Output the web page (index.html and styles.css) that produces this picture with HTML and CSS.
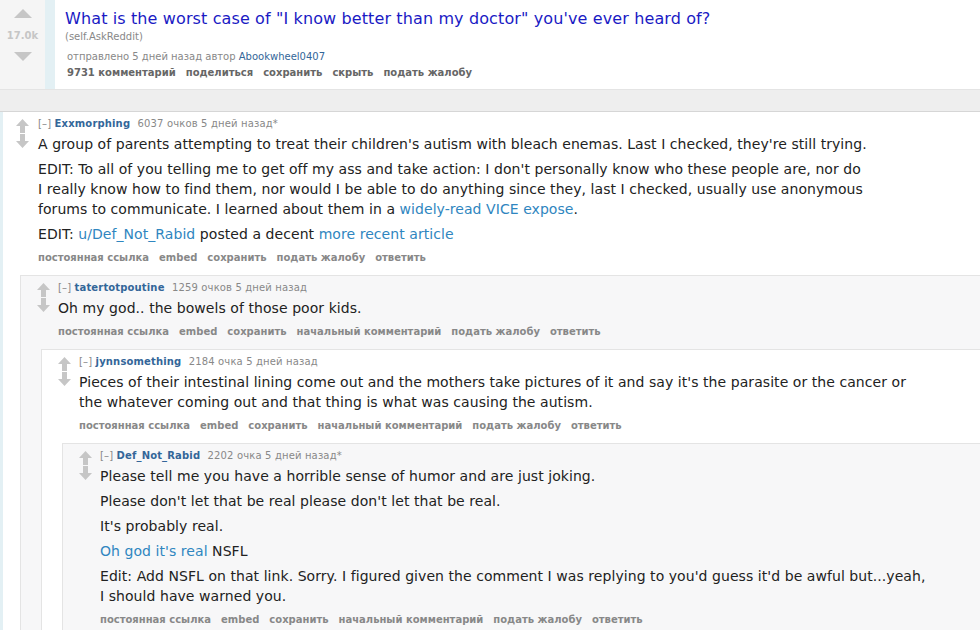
FILE: index.html
```html
<!DOCTYPE html>
<html lang="ru">
<head>
    <meta charset="UTF-8">
    <title>What is the worst case of "I know better than my doctor" you've ever heard of? : AskReddit</title>
    <link rel="stylesheet" href="styles.css">
</head>
<body>

    <!-- пост -->
    <div class="post">
      <div class="post-votes">
        <span class="tri tri-up"></span>
        <span class="score">17.0k</span>
        <span class="tri tri-down"></span>
      </div>
      <div class="post-strip"></div>
      <div class="post-entry">
        <a class="post-title" href="#">What is the worst case of "I know better than my doctor" you've ever heard of?</a>
        <span class="domain">(self.AskReddit)</span>
        <p class="post-tagline">отправлено 5 дней назад автор <a href="#">Abookwheel0407</a></p>
        <ul class="buttons post-buttons">
          <li><a href="#">9731 комментарий</a></li>
          <li><a href="#">поделиться</a></li>
          <li><a href="#">сохранить</a></li>
          <li><a href="#">скрыть</a></li>
          <li><a href="#">подать жалобу</a></li>
        </ul>
      </div>
    </div>

    <div class="band"></div>

    <!-- комментарии -->
    <div class="comments">

      <div class="comment odd top">
        <div class="votes">
          <svg class="arrow" viewBox="0 0 13 14"><path d="M6.5 0 L13 7 H9 V14 H4 V7 H0 Z"/></svg>
          <svg class="arrow" viewBox="0 0 13 14"><path d="M6.5 14 L13 7 H9 V0 H4 V7 H0 Z"/></svg>
        </div>
        <p class="tagline"><a class="expand" href="#">[–]</a> <a class="author" href="#">Exxmorphing</a> <span class="meta">6037 очков 5 дней назад*</span></p>
        <div class="md">
          <p>A group of parents attempting to treat their children's autism with bleach enemas. Last I checked, they're still trying.</p>
          <p>EDIT: To all of you telling me to get off my ass and take action: I don't personally know who these people are, nor do I really know how to find them, nor would I be able to do anything since they, last I checked, usually use anonymous forums to communicate. I learned about them in a <a href="#">widely-read VICE expose</a>.</p>
          <p>EDIT: <a href="#">u/Def_Not_Rabid</a> posted a decent <a href="#">more recent article</a></p>
        </div>
        <ul class="buttons">
          <li><a href="#">постоянная ссылка</a></li>
          <li><a href="#">embed</a></li>
          <li><a href="#">сохранить</a></li>
          <li><a href="#">подать жалобу</a></li>
          <li><a href="#">ответить</a></li>
        </ul>

        <div class="child">
          <div class="comment even">
            <div class="votes">
              <svg class="arrow" viewBox="0 0 13 14"><path d="M6.5 0 L13 7 H9 V14 H4 V7 H0 Z"/></svg>
              <svg class="arrow" viewBox="0 0 13 14"><path d="M6.5 14 L13 7 H9 V0 H4 V7 H0 Z"/></svg>
            </div>
            <p class="tagline"><a class="expand" href="#">[–]</a> <a class="author" href="#">tatertotpoutine</a> <span class="meta">1259 очков 5 дней назад</span></p>
            <div class="md">
              <p>Oh my god.. the bowels of those poor kids.</p>
            </div>
            <ul class="buttons">
              <li><a href="#">постоянная ссылка</a></li>
              <li><a href="#">embed</a></li>
              <li><a href="#">сохранить</a></li>
              <li><a href="#">начальный комментарий</a></li>
              <li><a href="#">подать жалобу</a></li>
              <li><a href="#">ответить</a></li>
            </ul>

            <div class="child">
              <div class="comment odd">
                <div class="votes">
                  <svg class="arrow" viewBox="0 0 13 14"><path d="M6.5 0 L13 7 H9 V14 H4 V7 H0 Z"/></svg>
                  <svg class="arrow" viewBox="0 0 13 14"><path d="M6.5 14 L13 7 H9 V0 H4 V7 H0 Z"/></svg>
                </div>
                <p class="tagline"><a class="expand" href="#">[–]</a> <a class="author" href="#">jynnsomething</a> <span class="meta">2184 очка 5 дней назад</span></p>
                <div class="md">
                  <p>Pieces of their intestinal lining come out and the mothers take pictures of it and say it's the parasite or the cancer or the whatever coming out and that thing is what was causing the autism.</p>
                </div>
                <ul class="buttons">
                  <li><a href="#">постоянная ссылка</a></li>
                  <li><a href="#">embed</a></li>
                  <li><a href="#">сохранить</a></li>
                  <li><a href="#">начальный комментарий</a></li>
                  <li><a href="#">подать жалобу</a></li>
                  <li><a href="#">ответить</a></li>
                </ul>

                <div class="child">
                  <div class="comment even">
                    <div class="votes">
                      <svg class="arrow" viewBox="0 0 13 14"><path d="M6.5 0 L13 7 H9 V14 H4 V7 H0 Z"/></svg>
                      <svg class="arrow" viewBox="0 0 13 14"><path d="M6.5 14 L13 7 H9 V0 H4 V7 H0 Z"/></svg>
                    </div>
                    <p class="tagline"><a class="expand" href="#">[–]</a> <a class="author" href="#">Def_Not_Rabid</a> <span class="meta">2202 очка 5 дней назад*</span></p>
                    <div class="md">
                      <p>Please tell me you have a horrible sense of humor and are just joking.</p>
                      <p>Please don't let that be real please don't let that be real.</p>
                      <p>It's probably real.</p>
                      <p><a href="#">Oh god it's real</a> NSFL</p>
                      <p>Edit: Add NSFL on that link. Sorry. I figured given the comment I was replying to you'd guess it'd be awful but...yeah, I should have warned you.</p>
                    </div>
                    <ul class="buttons">
                      <li><a href="#">постоянная ссылка</a></li>
                      <li><a href="#">embed</a></li>
                      <li><a href="#">сохранить</a></li>
                      <li><a href="#">начальный комментарий</a></li>
                      <li><a href="#">подать жалобу</a></li>
                      <li><a href="#">ответить</a></li>
                    </ul>
                  </div>
                </div>

              </div>
            </div>

          </div>
        </div>
      </div>

    </div>

</body>
</html>
```

FILE: styles.css
```css
* {
    box-sizing: border-box;
}

body {
    margin: 0;
    font-family: "DejaVu Sans", Verdana, sans-serif;
    color: #222;
    background: #fff;
    overflow: hidden;
}

a {
    text-decoration: none;
}

p {
    margin: 0;
}

/* ---------- кнопки ---------- */
.buttons {
    list-style: none;
    margin: 1px 0 9px;
    padding: 0;
    display: flex;
    font-size: 10px;
    line-height: 16px;
}

.buttons li {
    margin-right: 10px;
}

.buttons a {
    color: #888;
    font-weight: bold;
}

/* ---------- пост ---------- */
.post {
    display: flex;
    height: 89px;
}

.post-votes {
    width: 45px;
    background: #f5f5f5;
    display: flex;
    flex-direction: column;
    align-items: center;
    padding-top: 9px;
}

.tri {
    width: 0;
    height: 0;
    border-left: 9px solid transparent;
    border-right: 9px solid transparent;
}

.tri-up {
    border-bottom: 9px solid #c6c6c6;
}

.tri-down {
    border-top: 9px solid #c6c6c6;
}

.score {
    font-size: 10px;
    font-weight: bold;
    color: #c6c6c6;
    margin: 12px 0 11px;
}

.post-strip {
    width: 10px;
    background: #e3f0f4;
}

.post-entry {
    padding: 8px 0 0 10px;
}

.post-title {
    display: block;
    font-size: 16px;
    line-height: 22px;
    letter-spacing: 0.12px;
    color: #1a1ac4;
}

.domain {
    display: block;
    font-size: 10px;
    line-height: 14px;
    color: #888;
}

.post-tagline {
    font-size: 10px;
    line-height: 14px;
    color: #888;
    margin: 6px 0 0 2px;
}

.post-tagline a {
    color: #369;
}

.post-buttons {
    margin: 1px 0 0 2px;
}

.post-buttons a {
    color: #666;
}

.band {
    height: 23px;
    background: #eee;
    border-top: 1px solid #e4e4e4;
    border-bottom: 1px solid #d6d6d6;
}

/* ---------- комментарии ---------- */
.comments {
    border-left: 3px solid #e3f0f4;
}

.comment {
    display: grid;
    grid-template-columns: 35px 1fr;
    padding-top: 5px;
}

.comment.odd {
    background: #fff;
}

.comment.even {
    background: #f7f7f8;
}

.child .comment {
    grid-template-columns: 37px 1fr;
    border-top: 1px solid #e4e4e4;
    border-left: 1px solid #e4e4e4;
}

.votes {
    grid-row: 1 / 4;
    display: flex;
    flex-direction: column;
    gap: 1px;
    padding: 2px 0 0 13px;
}

.child .votes {
    padding-left: 16px;
}

.arrow {
    width: 13px;
    height: 14px;
    fill: #c6c6c6;
}

.tagline {
    font-size: 10px;
    line-height: 14px;
    letter-spacing: 0.15px;
    color: #888;
}

.tagline .expand {
    color: #888;
}

.tagline .author {
    color: #369;
    font-weight: bold;
    margin-right: 4px;
}

.md {
    max-width: 831px;
    font-size: 14px;
    line-height: 20px;
    letter-spacing: 0.06px;
}

.md p {
    margin: 5px 0;
}

.md p:first-child {
    margin-top: 3px;
}

.md a {
    color: #2f86c0;
}

.child {
    grid-column: 1 / -1;
    margin-left: 17px;
}

.child .child {
    margin-left: 20px;
}
```
